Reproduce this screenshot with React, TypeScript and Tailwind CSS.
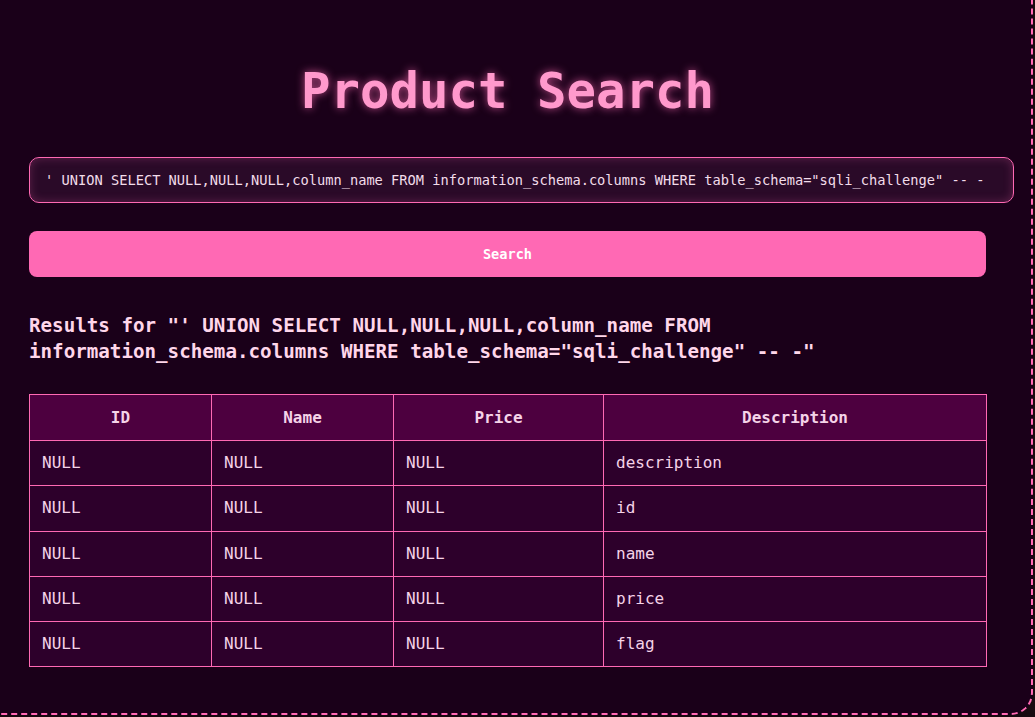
import React from 'react';

const query = `' UNION SELECT NULL,NULL,NULL,column_name FROM information_schema.columns WHERE table_schema="sqli_challenge" -- -`;

const rows = ['description', 'id', 'name', 'price', 'flag'];

const mono = { fontFamily: '"DejaVu Sans Mono", "Liberation Mono", monospace' };

export default function App() {
  return (
    <div className="w-[1035px] h-[717px] overflow-hidden bg-[#170a10]" style={mono}>
      <div className="w-[1033px] h-[715px] bg-[#1a0019] border-r-2 border-b-2 border-dashed border-[#ff69b4] rounded-br-[22px] pl-[29px] pt-[60px]">
        {/* Title */}
        <h1 className="w-[957px] text-center text-[49px] leading-[64px] font-bold text-[#ff99cc] [text-shadow:0_0_8px_rgba(255,105,180,0.7)]">
          Product Search
        </h1>

        {/* Search form */}
        <div className="mt-[33px] w-[985px] h-[46px] flex items-center px-[15px] rounded-[10px] border border-[#ff69b4] bg-[#2a0a28] shadow-[inset_0_0_10px_rgba(255,105,180,0.25)]">
          <span className="text-[13.7px] text-[#f2dcea] whitespace-nowrap">{query}</span>
        </div>
        <button className="mt-[28px] w-[957px] h-[46px] rounded-lg bg-[#ff69b4] text-white text-[13.6px] font-bold">
          Search
        </button>

        {/* Results heading */}
        <h2 className="mt-[36px] w-[957px] text-[19.2px] leading-[26px] font-bold text-[#ffd6ea]">
          {`Results for "${query}"`}
        </h2>

        {/* Results table */}
        <table className="mt-[29px] w-[957px] border-collapse table-fixed text-[16px] text-[#f5d3e8]">
          <colgroup>
            <col className="w-[182px]" />
            <col className="w-[182px]" />
            <col className="w-[210px]" />
            <col className="w-[383px]" />
          </colgroup>
          <thead>
            <tr className="bg-[#4d003f] h-[46px]">
              {['ID', 'Name', 'Price', 'Description'].map((h) => (
                <th key={h} className="border border-[#ff69b4] font-bold text-center">{h}</th>
              ))}
            </tr>
          </thead>
          <tbody>
            {rows.map((r) => (
              <tr key={r} className="bg-[#2d002b] h-[45.3px]">
                <td className="border border-[#ff69b4] px-3">NULL</td>
                <td className="border border-[#ff69b4] px-3">NULL</td>
                <td className="border border-[#ff69b4] px-3">NULL</td>
                <td className="border border-[#ff69b4] px-3">{r}</td>
              </tr>
            ))}
          </tbody>
        </table>
      </div>
    </div>
  );
}
